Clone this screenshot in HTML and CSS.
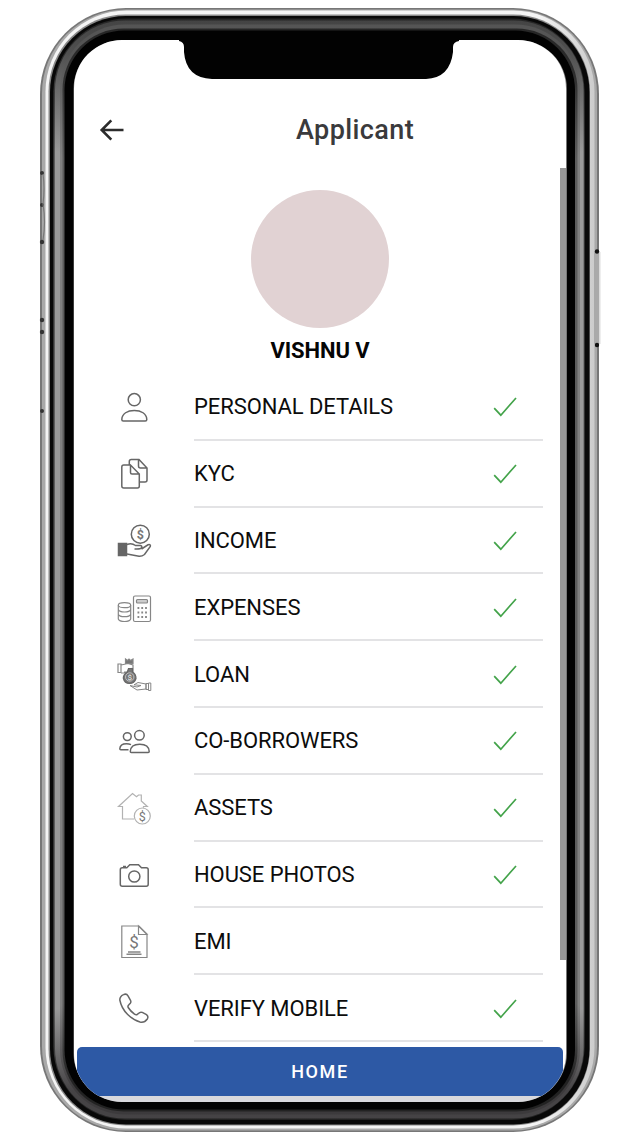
FILE: index.html
```
<!DOCTYPE html>
<html lang="en">
<head>
<meta charset="utf-8">
<title>Applicant</title>
<link rel="stylesheet" href="styles.css">
</head>
<body>
<div class="phone">
  <svg class="frame" width="640" height="1138" viewBox="0 0 640 1138" aria-hidden="true">
    <defs>
      <linearGradient id="m1" x1="0" y1="0" x2="0" y2="1"><stop offset="0" stop-color="#262626"/><stop offset=".04" stop-color="#2c2c2c"/><stop offset=".12" stop-color="#5c5c5c"/><stop offset=".9" stop-color="#5c5c5c"/><stop offset=".97" stop-color="#222"/><stop offset="1" stop-color="#222"/></linearGradient>
      <linearGradient id="m2" x1="0" y1="0" x2="0" y2="1"><stop offset="0" stop-color="#444"/><stop offset=".03" stop-color="#505050"/><stop offset=".12" stop-color="#999"/><stop offset=".9" stop-color="#999"/><stop offset=".975" stop-color="#454345"/><stop offset="1" stop-color="#454345"/></linearGradient>
      <linearGradient id="m3" x1="0" y1="0" x2="1" y2="0"><stop offset="0" stop-color="#f4f4f4"/><stop offset=".9" stop-color="#f4f4f4"/><stop offset="1" stop-color="#ccc"/></linearGradient>
      <linearGradient id="m4" x1="0" y1="0" x2="0" y2="1"><stop offset="0" stop-color="#555"/><stop offset=".03" stop-color="#555"/><stop offset=".12" stop-color="#808080"/><stop offset=".9" stop-color="#808080"/><stop offset=".975" stop-color="#3c3a3c"/><stop offset="1" stop-color="#3c3a3c"/></linearGradient>
    </defs>
    <rect x="40" y="8" width="559" height="1124" rx="86" fill="#777"/>
    <rect x="42" y="9.500" width="555" height="1121" rx="84" fill="#a9a9a9"/>
    <rect x="45.500" y="10.500" width="549" height="1118" rx="81" fill="url(#m3)"/>
    <rect x="48.500" y="14.500" width="541.500" height="1111" rx="77" fill="#888"/>
    <rect x="50" y="16" width="539.500" height="1108.500" rx="76" fill="#080808"/>
    <rect x="53.500" y="18.500" width="531" height="1101.500" rx="73" fill="url(#m1)"/>
    <rect x="55" y="20.500" width="528.500" height="1098" rx="70" fill="url(#m2)"/>
    <rect x="60" y="24.500" width="520" height="1090" rx="65" fill="url(#m4)"/>
    <rect x="62.500" y="28.500" width="515" height="1083" rx="61" fill="url(#m1)"/>
    <rect x="64.500" y="30.500" width="510.500" height="1079" rx="60" fill="#020202"/>
    <rect x="73.500" y="40" width="493.500" height="1062" rx="49" fill="#777"/>
    <g fill="#333">
      <circle cx="42" cy="173" r="2"/><circle cx="42" cy="205" r="2"/><circle cx="42" cy="242" r="2.200"/><circle cx="42" cy="320" r="2.200"/><circle cx="42" cy="332" r="2.200"/><circle cx="42" cy="411" r="2"/>
    </g>
    <path d="M43 174q2 14 0 30q3 18 0 36" fill="none" stroke="#777" stroke-width="1.200"/>
    <rect x="594" y="252" width="6" height="92" fill="#aaa"/>
    <rect x="599" y="252" width="1.500" height="92" fill="#ddd"/>
    <circle cx="597" cy="251.500" r="2.200" fill="#111"/><circle cx="597" cy="345" r="2.200" fill="#111"/>
  </svg>
  <main class="screen">
    <header class="bar">
      <svg class="back" width="26" height="24" viewBox="0 0 26 24"><path d="M24.500 12H3M12.300 2.300L2.700 12l9.600 9.700" fill="none" stroke="#2c2c2c" stroke-width="2.600"/></svg>
      <h1 class="title">Applicant</h1>
    </header>
    <section class="profile">
      <div class="avatar"></div>
      <h2 class="name">VISHNU V</h2>
    </section>
    <ul class="list">
      <li class="row">
        <svg class="icon" viewBox="0 0 40 40"><circle cx="20.300" cy="12.700" r="6.100"/><path d="M7.800 32.500C8 26.500 13.500 23.500 20.300 23.500s12.300 3 12.500 9q0 1.500-1.500 1.500H9.300q-1.500 0-1.500-1.500z"/></svg>
        <div class="cell"><span class="label">PERSONAL DETAILS</span><svg class="check" viewBox="0 0 24 20"><path d="M1.200 11.200l6.600 7L23 1"/></svg></div>
      </li>
      <li class="row">
        <svg class="icon" viewBox="0 0 40 40"><path d="M16.500 11H9.800Q7.800 11 7.800 13V32Q7.800 34 9.800 34H23.500Q25.300 34 25.300 32V20L16.500 11V18.500Q16.500 20 18 20H25M15.300 10.500V7.500Q15.300 5.500 17.300 5.500H25L33 14V26Q33 28 31 28H26M24.500 5.500V12Q24.500 14 26.500 14H33"/></svg>
        <div class="cell"><span class="label">KYC</span><svg class="check" viewBox="0 0 24 20"><path d="M1.200 11.200l6.600 7L23 1"/></svg></div>
      </li>
      <li class="row">
        <svg class="icon" viewBox="0 0 40 40"><circle cx="26.300" cy="13.200" r="9"/><text class="dollar bold" x="26.300" y="17.700" font-size="12.500">$</text><path d="M4.500 22.500h8v12h-8z" fill="#666"/><path d="M13 23.500C17 22 19.500 23 21.500 24.500H26.500Q28.500 25 27.500 27Q26.500 28.300 20.500 28M27.500 28L34 23.800Q37 23 36.300 25.500L30.500 33.500Q28 35.500 25 35.300L13 33"/></svg>
        <div class="cell"><span class="label">INCOME</span><svg class="check" viewBox="0 0 24 20"><path d="M1.200 11.200l6.600 7L23 1"/></svg></div>
      </li>
      <li class="row">
        <svg class="icon mid" viewBox="0 0 40 40"><ellipse cx="10.500" cy="17.200" rx="6.200" ry="2.500"/><path d="M4.300 17.200V31q1 2.500 6.200 2.500T16.700 31V17.200M4.300 21.500q1 2.500 6.200 2.500t6.200-2.500M4.300 26.200q1 2.500 6.200 2.500t6.200-2.500"/><rect x="19.500" y="8" width="17" height="25.500" rx="1.500"/><rect x="22.500" y="11.500" width="11" height="3.500" rx="1" fill="#ccc"/><path d="M23.500 20H33M23.500 24.500H33M23.500 29H33" stroke-width="2" stroke-dasharray="1.800 2"/></svg>
        <div class="cell"><span class="label">EXPENSES</span><svg class="check" viewBox="0 0 24 20"><path d="M1.200 11.200l6.600 7L23 1"/></svg></div>
      </li>
      <li class="row">
        <svg class="icon mid" viewBox="0 0 40 40"><path d="M4 9h3v8.500H4zM7 10l7-1.500 5 1.500v8H7M10 17h5l3-4"/><path d="M11.500 4l2 1.500L15 4l1.500 1.500L19 4v4.500h-7.500z" fill="#777"/><path d="M14.500 13.500h4V17q3.500 2 3.500 6.500-1.500 5-6.500 5T9.300 23q0-3.500 4-6z" fill="#777" stroke="#666"/><circle cx="15.700" cy="22" r="4.200" stroke="#ccc" stroke-width=".8"/><text class="dollar light" x="15.700" y="24.900" font-size="8">$</text><path d="M16 30.500l7 4.500 9-1V29l-8-1.500-4 2.300 7 .7-4 1.500zM32 28.500h2.500v6H32zM34.500 28h2.300v7.500h-2.300z" stroke-width="1"/></svg>
        <div class="cell"><span class="label">LOAN</span><svg class="check" viewBox="0 0 24 20"><path d="M1.200 11.200l6.600 7L23 1"/></svg></div>
      </li>
      <li class="row">
        <svg class="icon" viewBox="0 0 40 40"><circle cx="13.300" cy="15.600" r="3.900"/><circle cx="25.400" cy="14.300" r="4.800"/><path d="M16.300 30.500C16.500 26 20 23.300 25.700 23.300s9.300 2.700 9.500 7.200q0 1-1 1H17.300q-1 0-1-1zM14.500 28.700H6.800q-1 0-1-1C6 24 9 22.700 12.500 22.700q2.500 0 4.500.9"/></svg>
        <div class="cell"><span class="label">CO-BORROWERS</span><svg class="check" viewBox="0 0 24 20"><path d="M1.200 11.200l6.600 7L23 1"/></svg></div>
      </li>
      <li class="row">
        <svg class="icon pale" viewBox="0 0 40 40"><path d="M20 31H8.500V18.500H4.500L18.500 5.500l4 3.300 2-1.800h2.800v6l6 5.500H29.500v1.300"/><circle cx="28.300" cy="28" r="8"/><text class="dollar" x="28.300" y="32.500" font-size="12.500">$</text></svg>
        <div class="cell"><span class="label">ASSETS</span><svg class="check" viewBox="0 0 24 20"><path d="M1.200 11.200l6.600 7L23 1"/></svg></div>
      </li>
      <li class="row">
        <svg class="icon" viewBox="0 0 40 40"><path d="M8.300 12.700h4.500l3-3h8.700l3 3h4.700q2 0 2 2v14.500q0 2-2 2H8.300q-2 0-2-2V14.700q0-2 2-2zM9 11.500h3"/><circle cx="20.300" cy="21.500" r="5.600"/></svg>
        <div class="cell"><span class="label">HOUSE PHOTOS</span><svg class="check" viewBox="0 0 24 20"><path d="M1.200 11.200l6.600 7L23 1"/></svg></div>
      </li>
      <li class="row">
        <svg class="icon mid" viewBox="0 0 40 40"><path d="M7.800 4H25l8 8v23.500H7.800zM24.500 4v8.500H33z"/><path d="M14 30h12.500M12.500 32.300h15" stroke-width="1.500"/><text class="dollar" x="20" y="26" font-size="17">$</text></svg>
        <div class="cell"><span class="label">EMI</span></div>
      </li>
      <li class="row">
        <svg class="icon" viewBox="0 0 40 40"><path d="M9.500 5.600q-3.700 1.600-3.700 5.400Q7.500 19.500 13.700 25.500T26 33q4.500 1 7.300-3 1.500-2.500-.8-4.300l-4.200-2.300q-2.200-.8-3.800 1l-1.300 1.100q-1.200.7-2.700-.3-4-3-6.300-6.700-.7-1.300.4-2.400l1.700-1.800q1-1.300.2-3L14 6.800q-1.500-2.600-4.500-1.200z"/></svg>
        <div class="cell"><span class="label">VERIFY MOBILE</span><svg class="check" viewBox="0 0 24 20"><path d="M1.200 11.200l6.600 7L23 1"/></svg></div>
      </li>
    </ul>
    <button class="home" type="button">HOME</button>
    <div class="scrollbar"></div>
  </main>
  <svg class="notch" width="280" height="42" viewBox="0 0 280 42" aria-hidden="true"><path d="M0 2V3Q5 4 5 9V14Q7 40 33 41H247Q271 40 274 14V9Q274 4 280 3V0H0z" fill="#020202"/></svg>
</div>
</body>
</html>
```
FILE: styles.css
```
* {
  box-sizing: border-box;
}

body {
  margin: 0;
  background: #fff;
  color: #0c0c0c;
  font-family: Roboto, "Liberation Sans", sans-serif;
  overflow: hidden;
}

.phone {
  position: relative;
  width: 640px;
  height: 1138px;
  padding: 40px 73px 36px 74px;
}

.frame {
  position: absolute;
  left: 0;
  top: 0;
}

.notch {
  position: absolute;
  left: 179px;
  top: 38px;
}

.screen {
  position: relative;
  display: flex;
  flex-direction: column;
  width: 492px;
  height: 1062px;
  padding: 0 3px;
  overflow: hidden;
  border-radius: 48px;
  background: linear-gradient(#fff 1056px, #d9d9dd 1056px);
}

.bar {
  display: flex;
  align-items: center;
  height: 100px;
  padding: 80px 0 0 22px;
}

.back {
  flex: none;
}

.title {
  margin: 0;
  padding-left: 171px;
  color: #3a3a3c;
  font-size: 27px;
  font-weight: 500;
  line-height: 32px;
  letter-spacing: 0.4px;
}

.profile {
  display: flex;
  flex-direction: column;
  align-items: center;
  height: 234px;
  padding-top: 50px;
}

.avatar {
  width: 138px;
  height: 138px;
  border-radius: 50%;
  background: #e1d2d3;
}

.name {
  margin: 10px 0 0;
  color: #050505;
  font-size: 22px;
  font-weight: 700;
  line-height: 26px;
  letter-spacing: -0.1px;
}

.list {
  flex: none;
  height: 673px;
  margin: 0;
  padding: 0 20px 0 37px;
  list-style: none;
}

.row {
  display: flex;
  align-items: center;
  gap: 40px;
  height: 66.8px;
}

.icon {
  flex: none;
  width: 40px;
  height: 40px;
  fill: none;
  stroke: #666;
  stroke-width: 1.5;
}

.icon.mid {
  stroke: #868686;
  stroke-width: 1.2;
}

.icon.pale {
  stroke: #b2b2b2;
  stroke-width: 1.2;
}

.dollar {
  fill: #777;
  stroke: none;
  text-anchor: middle;
}

.dollar.bold {
  font-weight: 700;
}

.dollar.light {
  fill: #eee;
}

.cell {
  display: flex;
  flex: 1;
  align-items: center;
  justify-content: space-between;
  height: 100%;
  padding: 2px 26px 0 0;
  border-bottom: 2px solid #e3e3e5;
}

.label {
  font-size: 22px;
  line-height: 26px;
  letter-spacing: -0.08px;
}

.check {
  width: 24px;
  height: 20px;
  fill: none;
  stroke: #43a34a;
  stroke-width: 1.7;
}

.home {
  flex: none;
  height: 49px;
  padding: 0;
  border: 0;
  border-radius: 5px 5px 0 0;
  background: #2d59a5;
  color: #fff;
  font-family: inherit;
  font-size: 18px;
  font-weight: 500;
  letter-spacing: 1.6px;
}

.scrollbar {
  position: absolute;
  top: 128px;
  right: 0;
  width: 6px;
  height: 792px;
  background: #989898;
}
```
